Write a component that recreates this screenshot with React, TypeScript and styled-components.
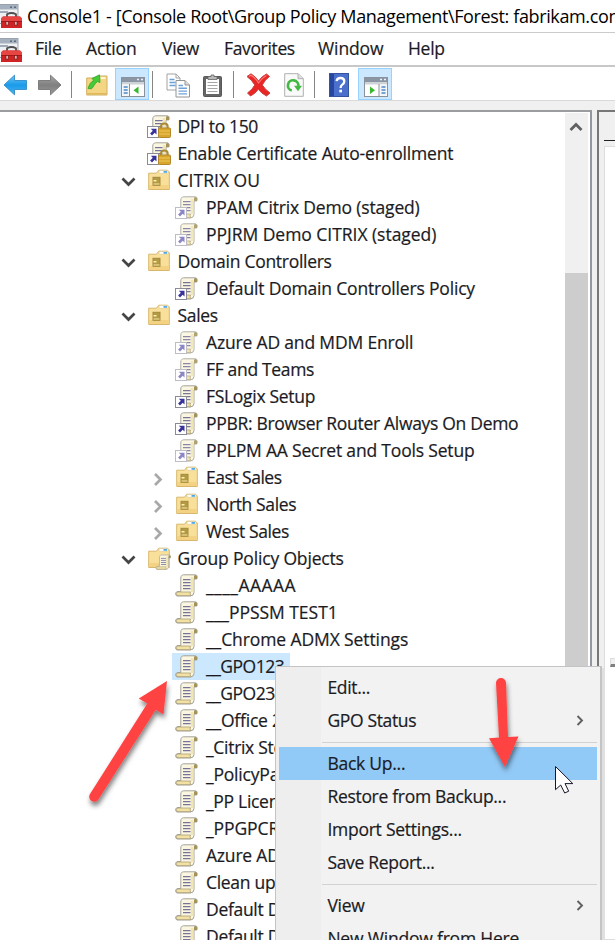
import React from 'react';
import styled, { createGlobalStyle } from 'styled-components';

const GlobalStyle = createGlobalStyle`
  * { box-sizing: border-box; }
  html, body { margin: 0; background: #fff; overflow: hidden; }
  body { font-family: 'Open Sans', 'Noto Sans', sans-serif; font-size: 17.5px; color: #1b1b1f; }
  svg { display: block; flex: none; }
`;

const Window = styled.div`
  position: relative;
  width: 615px;
  height: 940px;
  overflow: hidden;
  display: flex;
  flex-direction: column;
  background: #f0f0f0;
`;

const Text = styled.span<{ $track?: number }>`
  white-space: pre;
  letter-spacing: ${p => p.$track ?? -0.3}px;
  -webkit-text-stroke: 0.2px currentColor;
`;

const TitleText = styled(Text)`
  -webkit-text-stroke: 0;
`;

const TitleBar = styled.header`
  height: 33px;
  flex: none;
  display: flex;
  align-items: center;
  gap: 4px;
  padding-bottom: 1px;
  background: #fff;
  border-bottom: 1px solid #cbcbcb;
  color: #000;
  font-size: 18px;
`;

const MenuBar = styled.nav`
  height: 34px;
  flex: none;
  display: flex;
  align-items: center;
  background: #fff;
  border-bottom: 2px solid #c8c8c8;
`;

const MenuBarItem = styled.div<{ $w: number }>`
  width: ${p => p.$w}px;
  height: 30px;
  line-height: 29px;
`;

const MenuBarIcon = styled.div`
  width: 35px;
  height: 30px;
  padding-top: 4px;
`;

const Toolbar = styled.div`
  height: 34px;
  flex: none;
  display: flex;
  align-items: center;
  background: #fff;
  border-bottom: 1px solid #dadada;
`;

const ToolSlot = styled.div<{ $gap: number }>`
  margin-left: ${p => p.$gap}px;
  padding-top: 3px;
`;

const ToolToggle = styled.div<{ $gap: number }>`
  margin-left: ${p => p.$gap}px;
  width: 34px;
  height: 32px;
  padding: 8px 0 0 5px;
  background: #cce8ff;
  border: 1px solid #99d1ff;
`;

const Divider = styled.div<{ $gap: number }>`
  margin-left: ${p => p.$gap}px;
  width: 1px;
  height: 27px;
  margin-top: 2px;
  background: #858585;
`;

const Workspace = styled.main`
  flex: 1;
  min-height: 0;
  display: flex;
  padding-top: 9px;
  gap: 5px;
`;

const TreePane = styled.section`
  width: 592px;
  flex: none;
  display: flex;
  background: #fff;
  border-top: 2px solid #9a9ca0;
  border-right: 2px solid #9298a3;
`;

const Tree = styled.div`
  flex: 1;
  min-width: 0;
  padding-top: 1px;
`;

const TreeRow = styled.div<{ $depth: number }>`
  height: 27px;
  display: flex;
  align-items: center;
  padding-left: ${p => 118 + p.$depth * 28.5}px;
`;

const Expander = styled.div`
  width: 25px;
  padding-top: 3px;
`;

const NodeLabel = styled.div<{ $selected?: boolean }>`
  height: 27px;
  display: flex;
  align-items: center;
  gap: 7px;
  padding: 0 6px 0 3.5px;
  line-height: 25px;
  background: ${p => (p.$selected ? '#cce8ff' : 'transparent')};
`;

const Scrollbar = styled.div`
  width: 25px;
  flex: none;
  display: flex;
  flex-direction: column;
  background: #f0f0f0;
  border-right: 2px solid #fff;
  margin-top: 1px;
`;

const ScrollUp = styled.div`
  height: 160px;
  padding: 6px 0 0 4px;
`;

const Thumb = styled.div`
  flex: 1;
  background: #cdcdcd;
`;

const DetailPane = styled.section`
  flex: 1;
  border-top: 2px solid #777;
  border-left: 2px solid #777;
  padding-left: 5px;
  display: flex;
  flex-direction: column;
`;

const DetailHead = styled.div`
  height: 29px;
  flex: none;
  border-bottom: 1px solid #222;
`;

const DetailBody = styled.div`
  margin-top: 5px;
  flex: 1;
  background: #fff;
  border: 1px solid #ddd;
  border-right: 0;
`;

const Grip = styled.div`
  margin: 511px 0 0 5px;
  height: 9px;
  border-left: 1px solid #ddd;
  border-top: 1px solid #ddd;
  border-bottom: 3px solid #808080;
  background: #f0f0f0;
`;

const ContextMenu = styled.div`
  position: absolute;
  left: 275px;
  top: 666px;
  width: 327px;
  height: 300px;
  padding: 4px 3px 0;
  background: linear-gradient(90deg, #eeeeee 45px, #f2f2f2 45px);
  border: 1px solid #c4c4c4;
  border-right-width: 2px;
  box-shadow: 3px 2px 0 #e0e0e0;
`;

const MenuItem = styled.div<{ $active?: boolean }>`
  height: 33px;
  display: flex;
  align-items: center;
  justify-content: space-between;
  padding: 0 8px 2px 48.4px;
  background: ${p => (p.$active ? '#91c9f7' : 'transparent')};
`;

const MenuLine = styled.div`
  height: 10px;
  margin-left: 43px;
  display: flex;
  align-items: center;
  &::after { content: ''; flex: 1; height: 1px; background: #d2d2d2; }
`;

const Overlay = styled.svg`
  position: absolute;
  left: 0;
  top: 0;
  pointer-events: none;
`;

const Toolbox = () => (
  <svg width="23" height="24" viewBox="0 0 23 24">
    <rect x="-3" y="0.5" width="21" height="19" fill="#eef0f2" stroke="#9aa3ad" />
    <rect x="-3" y="1" width="21" height="4.5" fill="#a5b1be" />
    <path d="M10 3.3h2M14 3.3h2" stroke="#5d6b7b" strokeWidth="1.6" />
    <path d="M0 8h8" stroke="#8495a8" strokeWidth="1.5" />
    <path d="M7 13.5v-3.2q4.5-2.6 9 0v3.2" fill="none" stroke="#4f4f4f" strokeWidth="1.8" />
    <path d="M1 14.5l2-2h17l2 2v9.5H1z" fill="#d02424" />
    <path d="M1 14.5l2-2h17l2 2v2.5H1z" fill="#e64542" />
    <path d="M1 17.5h21" stroke="#a81616" strokeWidth="1" />
    <rect x="6" y="17.5" width="2.2" height="3.6" fill="#e8d5d5" stroke="#7b1010" strokeWidth=".7" />
    <rect x="14.8" y="17.5" width="2.2" height="3.6" fill="#e8d5d5" stroke="#7b1010" strokeWidth=".7" />
  </svg>
);

const Arrow = ({ left }: { left?: boolean }) => (
  <svg width="25" height="22" viewBox="0 0 25 22">
    <defs>
      <linearGradient id={left ? 'ab' : 'ag'} x1="0" y1="0" x2="0" y2="1">
        <stop offset="0" stopColor={left ? '#6cc8f8' : '#a8a8a8'} />
        <stop offset=".5" stopColor={left ? '#1b9aea' : '#808080'} />
        <stop offset="1" stopColor={left ? '#44b4f2' : '#999'} />
      </linearGradient>
    </defs>
    <path
      transform={left ? undefined : 'translate(25 0) scale(-1 1)'}
      d="M1 11L11.5 1.2V6.5H23.5V15.5H11.5V20.8Z"
      fill={left ? 'url(#ab)' : 'url(#ag)'}
      stroke={left ? '#3c93cc' : '#7d7d7d'}
      strokeLinejoin="round"
    />
  </svg>
);

const UpFolder = () => (
  <svg width="22" height="22" viewBox="0 0 22 22">
    <path d="M.7 4h11l2-2H21v19H.7z" fill="#f3d583" stroke="#d0b063" />
    <path d="M1.5 19h19v1.5h-19z" fill="#dfb75c" />
    <path d="M14.5 3h5v2h-5z" fill="#fff6d6" />
    <path d="M2 14.5C3.5 10 5 7.500 8 6.500L6 4.500 13.500.8 14 8.500 11.500 7.500C8.500 9.500 7.500 13 5.500 14.800z" fill="#45cb37" stroke="#2aa52a" strokeWidth=".8" />
  </svg>
);

const PaneIcon = ({ right }: { right?: boolean }) => (
  <svg width="24" height="20" viewBox="0 0 24 20">
    <rect x=".5" y=".5" width="23" height="19" fill="#fff" stroke="#8a929b" />
    <rect x="1" y="1" width="22" height="4" fill="#8a96a3" />
    <rect x="1" y="5" width="22" height="2.5" fill="#ced3d8" />
    <path d="M16 2.5h2M20 2.5h2" stroke="#eef" strokeWidth="1.4" />
    <rect x={right ? 15.5 : 1} y="7.5" width="7" height="11.5" fill="#f3f5f7" />
    <path d={right ? 'M15 7v12.5' : 'M8.5 7v12.5'} stroke="#8a929b" />
    <path d={right ? 'M17.5 10h4M17.5 13h4M17.5 16h4' : 'M2.7 10h4M2.7 13h4M2.7 16h4'} stroke="#4c88c8" strokeWidth="1.5" />
    <path d={right ? 'M6 9.500v7.500l5-3.750z' : 'M17.500 9.500v7.500l-5-3.750z'} fill="#38b82e" />
  </svg>
);

const CopyIcon = () => (
  <svg width="25" height="25" viewBox="0 0 25 25">
    <path d="M1 1h9l4 4v12H1z" fill="#fff" stroke="#a2a2a2" />
    <path d="M10 1v4h4" fill="none" stroke="#a2a2a2" />
    <path d="M3.5 6.5h5M3.5 9.5h6M3.5 12.5h6" stroke="#6aa0d8" strokeWidth="1.4" />
    <path d="M10 7.5h9l4.500 4.500v12H10z" fill="#fff" stroke="#949494" />
    <path d="M19 7.5V12h4.5" fill="#ddd" stroke="#949494" />
    <path d="M12.5 12.5h4.500M12.500 15.300h8.500M12.500 18.100h8.500M12.500 20.900h8.500" stroke="#6ea2d8" strokeWidth="1.4" />
  </svg>
);

const Clipboard = () => (
  <svg width="19" height="23" viewBox="0 0 19 23">
    <rect x=".5" y="2.5" width="18" height="20" rx="1" fill="#666" stroke="#585858" />
    <rect x="3" y="5" width="13" height="15" fill="#fff" />
    <path d="M5 5.5V2.5h3V1h3v1.5h3v3z" fill="#b8b8b8" stroke="#666" strokeWidth=".8" />
    <path d="M4.5 8.5h10M4.5 11.5h10M4.5 14.5h10M4.5 17.5h10" stroke="#a6a6a6" strokeWidth="1.2" />
  </svg>
);

const Delete = () => (
  <svg width="25" height="24" viewBox="0 0 25 24">
    <path d="M1 3.5L5 .8Q10 4 12.5 8 16 3 20.5 1L23.5 3.5Q18.5 7 16.3 12 19 16.5 24 20L20.5 23Q15.5 20.5 12.3 16.3 9 21 4.5 23L1.5 20Q6.5 16.5 8.8 12 6 7 1 3.5z" fill="#e82626" stroke="#d04040" />
    <path d="M3 3.6L5 2.2Q10 5.5 12.5 10 16.5 4.5 20.4 2.5" fill="none" stroke="#ff7a75" strokeWidth="1.2" />
  </svg>
);

const Refresh = () => (
  <svg width="20" height="24" viewBox="0 0 20 24">
    <path d="M.7.7h13.6l5 5v17.6H.7z" fill="#fafafa" stroke="#b0b0b0" />
    <path d="M14 .7v5h5.3" fill="#ddd" stroke="#b0b0b0" />
    <path d="M7.8 17.5A5.200 5.200 0 1 1 14.300 13" fill="none" stroke="#43b943" strokeWidth="2.7" />
    <path d="M10 12.800h8l-4 5.500z" fill="#43b943" />
  </svg>
);

const Help = () => (
  <svg width="20" height="24" viewBox="0 0 20 24">
    <rect x=".5" y=".5" width="19" height="23" fill="#4a70cb" stroke="#34549f" />
    <path d="M1 1h4v22H1z" fill="#2746a0" />
    <path d="M7.6 8.2Q8 5 11.6 5 15.3 5 15.3 8.4 15.3 10.4 13 11.9 11.6 12.8 11.6 15" fill="none" stroke="#fff" strokeWidth="2.3" />
    <rect x="10.3" y="16.7" width="2.7" height="2.7" fill="#fff" />
  </svg>
);

const ScrollShape = () => (
  <>
    <path d="M6.5 1.8Q7 .8 8.5.8H20.5Q22.4 1 22.2 3.5L21.8 5H19V18.5Q18.8 21.8 15.5 22H2Q.3 21.5.7 19.2 1 17.6 3 17.5H5.8V4Q5.8 2.4 6.5 1.8z" fill="#fbf6df" stroke="#a3a39b" strokeWidth="1" />
    <path d="M15.8 3H18.500V18H15.800z" fill="#f1e5b4" />
    <path d="M19 5V2.3Q19.5.8 21 1.2 22.7 2 22 5z" fill="#a3925b" />
    <path d="M2.5 18H15.5Q14.3 20 16 21.6H2Q.6 19.5 2.5 18z" fill="#f3e1a4" stroke="#aa9e77" strokeWidth=".8" />
    <path d="M8 5.7H15.500M8 8.700H15.500M8 11.700H15.500M8 14.700H15.500" stroke="#77749c" strokeWidth="1.2" />
  </>
);

const LinkBadge = ({ faded }: { faded?: boolean }) => (
  <g>
    <rect x=".5" y="11.5" width="11" height="11" fill="#fff" stroke={faded ? '#bdbdc6' : '#8b8b95'} />
    <path d="M3.8 13.800H9.500V19.500L7.700 17.700 5 20.400 3.100 18.500 5.800 15.800z" fill={faded ? '#8c86c5' : '#38329a'} />
  </g>
);

type Kind = 'gpo' | 'link' | 'faded' | 'locked' | 'ou' | 'container';

const NodeIcon = ({ kind }: { kind: Kind }) => {
  if (kind === 'ou' || kind === 'container') {
    return (
      <svg width="24" height="23" viewBox="0 0 24 23">
        <path d="M1.7 4.2H9.5L11.8 1.2H20.5L22.3 3V20.5H1.7z" fill="#f9e09a" stroke="#d8b76c" />
        <path d="M2.2 16H21.8V20H2.2z" fill="#f3d383" />
        <rect x="12" y="1.5" width="9" height="2.8" rx="1" fill="#fff" stroke="#d7c799" strokeWidth=".6" />
        <path d="M16.5 2.900h3.500" stroke="#3e9fe5" strokeWidth="1.6" />
        {kind === 'ou' ? (
          <>
            <rect x="6" y="8.3" width="7" height="8" fill="#b39a45" stroke="#a38a3c" />
            <path d="M6.500 11h3v1.500h-3z" fill="#fff0ae" />
            <path d="M6.500 15h6" stroke="#f8e6a0" />
          </>
        ) : (
          <g transform="translate(8.5 7.5) scale(.68)"><ScrollShape /></g>
        )}
      </svg>
    );
  }
  return (
    <svg width={24} height="23" viewBox="0 0 24 23">
      <g opacity={kind === 'faded' ? 0.86 : 1}><ScrollShape /></g>
      {kind !== 'gpo' && <LinkBadge faded={kind === 'faded'} />}
      {kind === 'locked' && (
        <g>
          <path d="M14 14V11.5Q14 8.5 17.3 8.5 20.7 8.5 20.7 11.5V14" fill="none" stroke="#a98a36" strokeWidth="2" />
          <rect x="11.5" y="13" width="12" height="9.5" rx="1" fill="#d8a62c" stroke="#b3892c" />
          <path d="M12 16h11M12 19h11" stroke="#edc75b" />
        </g>
      )}
    </svg>
  );
};

const Chevron = ({ dir }: { dir: 'down' | 'right' | 'sub' | 'up' }) => {
  const d = {
    down: 'M4.5 5.5L10.5 11.500 16.500 5.500',
    right: 'M8 4L13.5 9.5 8 15',
    sub: 'M8.5 5L13 9.5 8.5 14',
    up: 'M1.5 11L7 5.5 12.5 11',
  }[dir];
  return (
    <svg width={dir === 'up' ? 15 : 20} height="18" viewBox={dir === 'up' ? '0 0 15 18' : '0 0 20 18'}>
      <path d={d} fill="none" stroke={dir === 'right' ? '#a8a8a8' : dir === 'down' ? '#454545' : '#606060'} strokeWidth={dir === 'sub' ? 1.9 : 2.7} />
    </svg>
  );
};

interface Node {
  label: string;
  kind: Kind;
  depth: number;
  expand?: 'down' | 'right';
  selected?: boolean;
  track?: number;
}

const nodes: Node[] = [
  { label: 'DPI to 150', kind: 'locked', depth: 0, track: -0.35 },
  { label: 'Enable Certificate Auto-enrollment', kind: 'locked', depth: 0, track: -0.17 },
  { label: 'CITRIX OU', kind: 'ou', depth: 0, expand: 'down', track: 0.03 },
  { label: 'PPAM Citrix Demo (staged)', kind: 'faded', depth: 1, track: -0.17 },
  { label: 'PPJRM Demo CITRIX (staged)', kind: 'faded', depth: 1, track: -0.03 },
  { label: 'Domain Controllers', kind: 'ou', depth: 0, expand: 'down', track: -0.28 },
  { label: 'Default Domain Controllers Policy', kind: 'link', depth: 1, track: -0.18 },
  { label: 'Sales', kind: 'ou', depth: 0, expand: 'down' },
  { label: 'Azure AD and MDM Enroll', kind: 'faded', depth: 1, track: -0.17 },
  { label: 'FF and Teams', kind: 'faded', depth: 1, track: -0.33 },
  { label: 'FSLogix Setup', kind: 'link', depth: 1 },
  { label: 'PPBR: Browser Router Always On Demo', kind: 'link', depth: 1, track: -0.31 },
  { label: 'PPLPM AA Secret and Tools Setup', kind: 'faded', depth: 1, track: -0.18 },
  { label: 'East Sales', kind: 'ou', depth: 1, expand: 'right', track: -0.5 },
  { label: 'North Sales', kind: 'ou', depth: 1, expand: 'right', track: -0.38 },
  { label: 'West Sales', kind: 'ou', depth: 1, expand: 'right', track: -0.42 },
  { label: 'Group Policy Objects', kind: 'container', depth: 0, expand: 'down', track: -0.16 },
  { label: '____AAAAA', kind: 'gpo', depth: 1, track: 0.45 },
  { label: '___PPSSM TEST1', kind: 'gpo', depth: 1, track: -0.03 },
  { label: '__Chrome ADMX Settings', kind: 'gpo', depth: 1, track: -0.1 },
  { label: '__GPO123', kind: 'gpo', depth: 1, selected: true, track: -0.5 },
  { label: '__GPO234', kind: 'gpo', depth: 1, track: -0.5 },
  { label: '__Office 2016', kind: 'gpo', depth: 1, track: -0.2 },
  { label: '_Citrix Storefront', kind: 'gpo', depth: 1, track: -0.3 },
  { label: '_PolicyPak', kind: 'gpo', depth: 1, track: -0.2 },
  { label: '_PP Licenses', kind: 'gpo', depth: 1 },
  { label: '_PPGPCR', kind: 'gpo', depth: 1, track: -0.1 },
  { label: 'Azure AD', kind: 'gpo', depth: 1, track: -0.2 },
  { label: 'Clean up', kind: 'gpo', depth: 1 },
  { label: 'Default Domain', kind: 'gpo', depth: 1 },
  { label: 'Default Domain', kind: 'gpo', depth: 1 },
];

export default function App() {
  return (
    <Window>
      <GlobalStyle />
      <TitleBar>
        <Toolbox />
        <TitleText $track={-0.37}>Console1 - [Console Root\Group Policy Management\Forest: fabrikam.com]</TitleText>
      </TitleBar>
      <MenuBar>
        <MenuBarIcon><Toolbox /></MenuBarIcon>
        <MenuBarItem $w={51}><Text>File</Text></MenuBarItem>
        <MenuBarItem $w={76}><Text $track={-0.15}>Action</Text></MenuBarItem>
        <MenuBarItem $w={62}><Text>View</Text></MenuBarItem>
        <MenuBarItem $w={94}><Text $track={-0.35}>Favorites</Text></MenuBarItem>
        <MenuBarItem $w={90}><Text $track={-0.1}>Window</Text></MenuBarItem>
        <MenuBarItem $w={60}><Text>Help</Text></MenuBarItem>
      </MenuBar>
      <Toolbar>
        <ToolSlot $gap={3}><Arrow left /></ToolSlot>
        <ToolSlot $gap={9}><Arrow /></ToolSlot>
        <Divider $gap={9} />
        <ToolSlot $gap={14}><UpFolder /></ToolSlot>
        <ToolToggle $gap={7}><PaneIcon /></ToolToggle>
        <Divider $gap={3} />
        <ToolSlot $gap={13}><CopyIcon /></ToolSlot>
        <ToolSlot $gap={12}><Clipboard /></ToolSlot>
        <Divider $gap={11} />
        <ToolSlot $gap={12}><Delete /></ToolSlot>
        <ToolSlot $gap={13}><Refresh /></ToolSlot>
        <Divider $gap={10} />
        <ToolSlot $gap={14}><Help /></ToolSlot>
        <ToolToggle $gap={9}><PaneIcon right /></ToolToggle>
      </Toolbar>
      <Workspace>
        <TreePane>
          <Tree>
            {nodes.map((n, i) => (
              <TreeRow key={i} $depth={n.depth}>
                <Expander>{n.expand && <Chevron dir={n.expand} />}</Expander>
                <NodeLabel $selected={n.selected}>
                  <NodeIcon kind={n.kind} />
                  <Text $track={n.track}>{n.label}</Text>
                </NodeLabel>
              </TreeRow>
            ))}
          </Tree>
          <Scrollbar>
            <ScrollUp><Chevron dir="up" /></ScrollUp>
            <Thumb />
          </Scrollbar>
        </TreePane>
        <DetailPane>
          <DetailHead />
          <DetailBody><Grip /></DetailBody>
        </DetailPane>
      </Workspace>
      <ContextMenu>
        <MenuItem><Text>Edit...</Text></MenuItem>
        <MenuItem><Text $track={-0.35}>GPO Status</Text><Chevron dir="sub" /></MenuItem>
        <MenuLine />
        <MenuItem $active><Text $track={-0.25}>Back Up...</Text></MenuItem>
        <MenuItem><Text>Restore from Backup...</Text></MenuItem>
        <MenuItem><Text $track={-0.25}>Import Settings...</Text></MenuItem>
        <MenuItem><Text>Save Report...</Text></MenuItem>
        <MenuLine />
        <MenuItem><Text>View</Text><Chevron dir="sub" /></MenuItem>
        <MenuItem><Text $track={-0.2}>New Window from Here</Text></MenuItem>
      </ContextMenu>
      <Overlay width="615" height="940" viewBox="0 0 615 940">
        <defs>
          <filter id="drop" x="-30%" y="-20%" width="160%" height="150%">
            <feDropShadow dx="1" dy="4" stdDeviation="2.5" floodOpacity=".5" />
          </filter>
        </defs>
        <g fill="#ff4343" filter="url(#drop)">
          <path d="M167 681L163.5 714.5 155.8 709.7 98.4 799.5A5 5 0 0 1 90 794L147.3 703.6 138.8 698.5z" />
          <path d="M496 683A5 5 0 0 1 506 683L508 737 518.5 736.4 505 767 489 738.3 499 737.6z" />
        </g>
        <path d="M555.5 766.5V789.7L560.7 785 564.7 793 568.7 791.2 565 783.6H572.8z" fill="#fff" stroke="#16162a" />
      </Overlay>
    </Window>
  );
}
